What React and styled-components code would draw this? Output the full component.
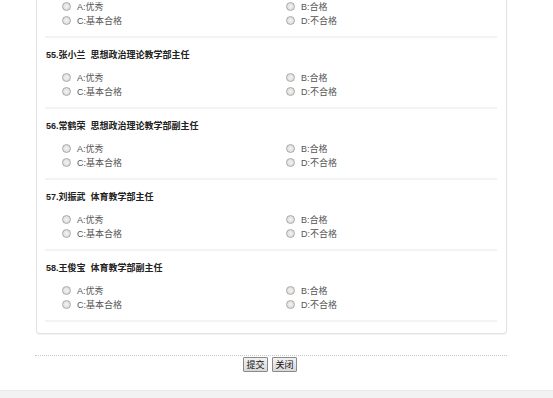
import React from "react";
import styled, { createGlobalStyle } from "styled-components";

const GlobalStyle = createGlobalStyle`
  html, body {
    margin: 0;
    padding: 0;
    background: #fff;
    font-family: "Liberation Sans", "Noto Sans CJK SC", sans-serif;
    font-size: 9px;
    color: #444;
  }
`;

const items = [
  { no: 55, name: "张小兰", post: "思想政治理论教学部主任" },
  { no: 56, name: "常鹤荣", post: "思想政治理论教学部副主任" },
  { no: 57, name: "刘振武", post: "体育教学部主任" },
  { no: 58, name: "王俊宝", post: "体育教学部副主任" },
];

const choices = ["A:优秀", "B:合格", "C:基本合格", "D:不合格"];

function Options({ group }) {
  return (
    <OptionGrid>
      {choices.map((c) => (
        <Choice key={c}>
          <Radio type="radio" name={"q" + group} />
          <span>{c}</span>
        </Choice>
      ))}
    </OptionGrid>
  );
}

export default function App() {
  return (
    <Page>
      <GlobalStyle />
      <Wrapper>
        <Panel>
          <Item $partial>
            <Options group={54} />
          </Item>
          {items.map((it) => (
            <Item key={it.no}>
              <Title>
                {it.no}.{it.name}&nbsp; {it.post}
              </Title>
              <Options group={it.no} />
            </Item>
          ))}
        </Panel>
        <Actions>
          <Button type="button">提交</Button>
          <Button type="button">关闭</Button>
        </Actions>
      </Wrapper>
      <Footer />
    </Page>
  );
}

const Page = styled.div`
  width: 553px;
  height: 398px;
  overflow: hidden;
  display: flex;
  flex-direction: column;
`;

const Wrapper = styled.div`
  width: 472px;
  margin-left: 35px;
`;

const Panel = styled.div`
  margin-left: 1px;
  width: 469px;
  border: 1px solid #e2e2e2;
  border-top: none;
  border-radius: 0 0 4px 4px;
  box-shadow: 0 1px 1px rgba(0, 0, 0, 0.05);
  padding: 0 9px 11px 8px;
  box-sizing: border-box;
  width: 471px;
`;

const Item = styled.div`
  padding: ${(p) => (p.$partial ? "0" : "11px")} 0 9px 0;
  margin-top: ${(p) => (p.$partial ? "-1px" : "0")};
  border-bottom: 2px solid #f3f3f3;
`;

const Title = styled.div`
  line-height: 12px;
  font-weight: bold;
  color: #222;
  padding-left: 1px;
  margin-bottom: 9px;
  font-family: "Liberation Sans", "Noto Sans CJK SC", sans-serif;
`;

const OptionGrid = styled.div`
  display: grid;
  grid-template-columns: 224px 224px;
  padding-left: 17px;
`;

const Choice = styled.label`
  display: flex;
  align-items: center;
  height: 14px;
  gap: 6px;
  color: #555;
`;

const Radio = styled.input`
  appearance: none;
  margin: 0;
  width: 9px;
  height: 9px;
  border-radius: 50%;
  border: 1px solid #a9a9a9;
  background: radial-gradient(circle at 50% 50%, #f4f4f4 0%, #dedede 70%);
  box-sizing: border-box;
  flex: none;
`;

const Actions = styled.div`
  margin-top: 21px;
  border-top: 1px dotted #c8c8c8;
  display: flex;
  justify-content: center;
  gap: 4px;
  padding-top: 1px;
  padding-right: 2px;
`;

const Button = styled.button`
  width: 25px;
  height: 15px;
  padding: 0;
  font-family: "Noto Sans CJK SC", sans-serif;
  font-size: 9px;
  line-height: 13px;
  color: #111;
  border: 1px solid #8a8a8a;
  border-radius: 1px;
  background: linear-gradient(#f2f2f2, #d8d8d8);
`;

const Footer = styled.div`
  margin-top: auto;
  height: 7px;
  background: #f2f2f2;
  border-top: 1px solid #e9e9e9;
`;
